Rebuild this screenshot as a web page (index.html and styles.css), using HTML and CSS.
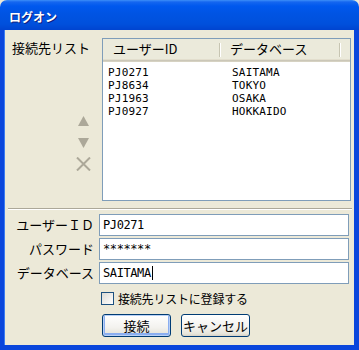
FILE: index.html
```html
<!DOCTYPE html>
<html lang="ja">
<head>
<meta charset="utf-8">
<title>ログオン</title>
<link rel="stylesheet" href="styles.css">
</head>
<body>
<div class="window">
  <div class="titlebar"><span class="title">ログオン</span></div>
  <div class="body">
    <div class="top">
      <div class="side">
        <div class="side-label">接続先リスト</div>
        <div class="tools">
          <svg class="tool up" width="11" height="10" viewBox="0 0 11 10"><polygon points="5.5,0 11,10 0,10"/></svg>
          <svg class="tool down" width="11" height="10" viewBox="0 0 11 10"><polygon points="0,0 11,0 5.5,10"/></svg>
          <svg class="tool del" width="15" height="14" viewBox="0 0 15 14"><path d="M1 0.5 L14 13.5 M14 0.5 L1 13.5"/></svg>
        </div>
      </div>
      <div class="list">
        <div class="list-head">
          <div class="col c1">ユーザーID</div>
          <div class="col c2">データベース</div>
          <div class="col c3"></div>
        </div>
        <div class="list-rows">
          <span>PJ0271</span><span>SAITAMA</span>
          <span>PJ8634</span><span>TOKYO</span>
          <span>PJ1963</span><span>OSAKA</span>
          <span>PJ0927</span><span>HOKKAIDO</span>
        </div>
      </div>
    </div>
    <div class="sep"></div>
    <div class="form">
      <div class="label">ユーザーＩＤ</div><div class="field">PJ0271</div>
      <div class="label">パスワード</div><div class="field">*******</div>
      <div class="label">データベース</div><div class="field">SAITAMA<span class="caret"></span></div>
    </div>
    <div class="check"><span class="box"></span><span class="check-label">接続先リストに登録する</span></div>
    <div class="buttons">
      <div class="btn default">接続</div>
      <div class="btn">キャンセル</div>
    </div>
  </div>
</div>
</body>
</html>
```
FILE: styles.css
```css
html, body {
  margin: 0;
  padding: 0;
  background: #ECE9D8;
}
.window {
  width: 359px;
  height: 350px;
  display: flex;
  flex-direction: column;
  font-family: "Noto Sans CJK JP", sans-serif;
  color: #000;
}
.titlebar {
  flex: none;
  height: 30px;
  box-sizing: border-box;
  padding: 3px 0 0 9px;
  display: flex;
  align-items: center;
  border-radius: 7px 7px 0 0;
  background: linear-gradient(#3d8ff8 0, #1566f0 2px, #0058ee 6px, #0054e3 45%, #0050dc 80%, #0044d0 100%);
}
.title {
  color: #fff;
  font-size: 12px;
  font-weight: bold;
  line-height: 14px;
  text-shadow: 1px 1px 0 #0a1e80;
}
.body {
  flex: 1;
  background: #ECE9D8;
  border: solid #0A46DC;
  border-width: 0 5px 5px 4px;
  padding: 8px 3px 0 4px;
  display: flex;
  flex-direction: column;
  box-shadow: inset 1px 0 0 #3b7cf2;
}
.top {
  display: flex;
  height: 163px;
}
.side {
  width: 94px;
  flex: none;
  display: flex;
  flex-direction: column;
}
.side-label {
  font-size: 13px;
  line-height: 16px;
  margin-top: 2px;
  padding-left: 4px;
}
.tools {
  width: 15px;
  margin-left: 68px;
  margin-top: 60px;
  display: flex;
  flex-direction: column;
  align-items: center;
}
.tool { display: block; fill: #ACA899; }
.tool.down { margin-top: 12px; }
.tool.del { margin-top: 9px; fill: none; stroke: #ACA899; stroke-width: 2; }
.list {
  width: 249px;
  height: 163px;
  box-sizing: border-box;
  border: 1px solid #7F9DB9;
  background: #fff;
}
.list-head {
  display: flex;
  height: 23px;
  box-sizing: border-box;
  background: #EBEADB;
  box-shadow: inset 0 -1px 0 #D6D2C2, inset 0 -2px 0 #CBC7B8, inset 0 -3px 0 #E2DECD;
}
.col {
  position: relative;
  box-sizing: border-box;
  font-size: 13px;
  line-height: 20px;
  padding-left: 10px;
  white-space: nowrap;
}
.c1 { width: 120px; }
.c2 { width: 123px; }
.c3 { flex: 1; }
.c1::after, .c2::after {
  content: "";
  position: absolute;
  right: 0;
  top: 4px;
  height: 14px;
  width: 1px;
  background: #C7C5B2;
  box-shadow: 1px 0 0 #fff;
}
.list-rows {
  display: grid;
  grid-template-columns: 124px auto;
  padding: 4px 0 0 5px;
  font-family: "DejaVu Sans Mono", monospace;
  font-size: 11px;
  line-height: 13px;
  letter-spacing: 0.2px;
}
.sep {
  margin-top: 7px;
  margin-right: -1px;
  height: 0;
  border-top: 1px solid #ACA899;
  border-bottom: 1px solid #fff;
}
.form {
  margin-top: 4px;
  display: grid;
  grid-template-columns: 86px 250px;
  column-gap: 5px;
  row-gap: 2px;
}
.label {
  font-size: 13px;
  line-height: 22px;
  text-align: right;
  white-space: nowrap;
}
.field {
  height: 22px;
  box-sizing: border-box;
  border: 1px solid #7F9DB9;
  background: #fff;
  padding-left: 3px;
  font-family: "DejaVu Sans Mono", monospace;
  font-size: 12px;
  line-height: 20px;
  letter-spacing: -0.4px;
  display: flex;
  align-items: center;
}
.caret {
  display: inline-block;
  width: 1px;
  height: 14px;
  background: #000;
  margin-left: 1px;
}
.check {
  margin-top: 8px;
  padding-left: 93px;
  display: flex;
  align-items: center;
}
.box {
  width: 13px;
  height: 13px;
  box-sizing: border-box;
  border: 1px solid #1C5180;
  background: linear-gradient(135deg, #DCDBD5, #fff);
}
.check-label {
  margin-left: 4px;
  font-size: 12px;
  line-height: 13px;
  letter-spacing: -0.2px;
}
.buttons {
  margin-top: 9px;
  padding-left: 94px;
  display: flex;
  gap: 10px;
}
.btn {
  width: 69px;
  height: 23px;
  box-sizing: border-box;
  border: 1px solid #003C74;
  border-radius: 3px;
  background: linear-gradient(#fff, #F3F2EE 60%, #E6E4DA 90%, #D6D0C5);
  font-size: 13px;
  line-height: 21px;
  text-align: center;
}
.btn.default {
  box-shadow: inset 0 0 0 1px #B8D0F6, inset 0 -1px 0 2px #8BAEF0;
}
```
